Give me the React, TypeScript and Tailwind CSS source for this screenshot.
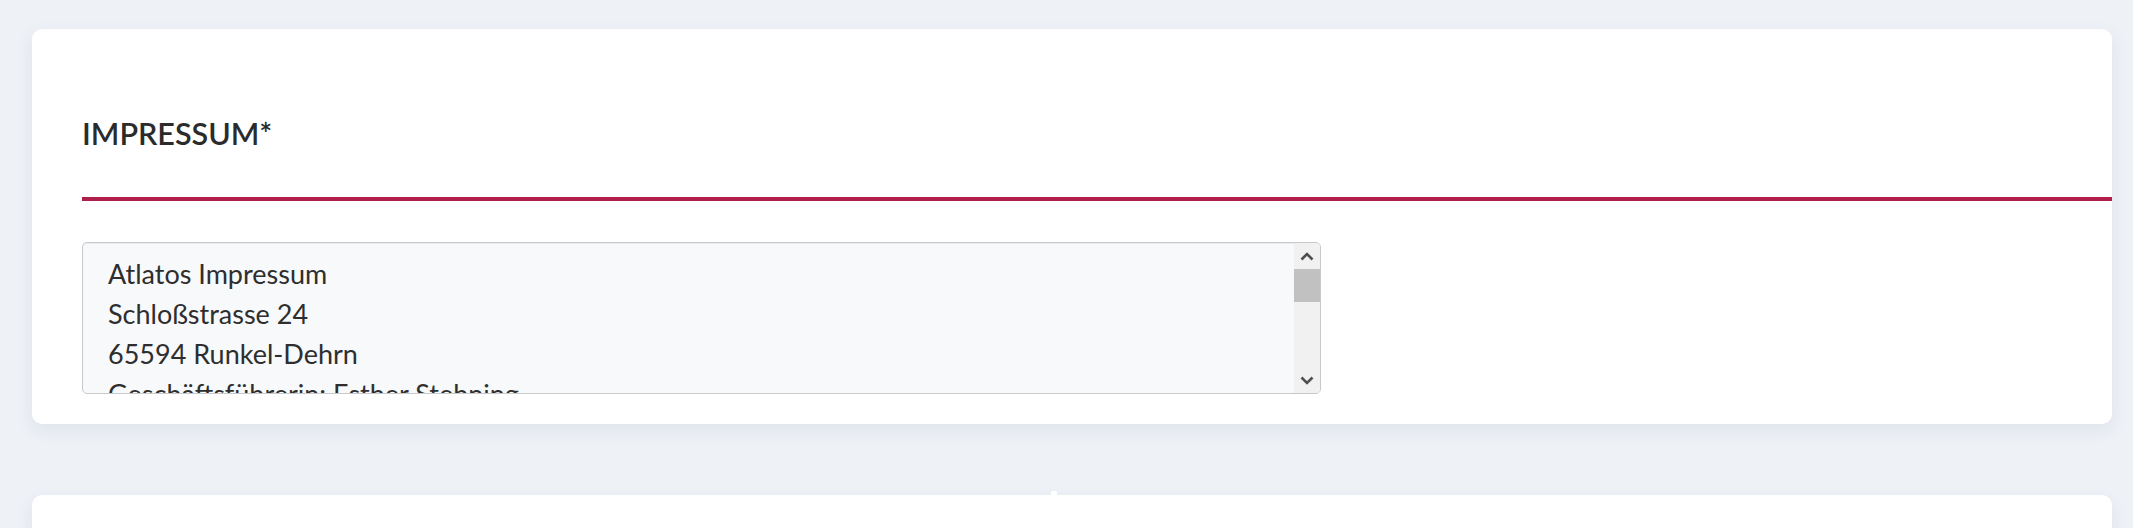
const lines = [
  "Atlatos Impressum",
  "Schloßstrasse 24",
  "65594 Runkel-Dehrn",
  "Geschäftsführerin: Esther Stehning",
  "Telefon: 06431 - 9 73 99 70",
];

function Chevron({ up }: { up?: boolean }) {
  return (
    <svg width="14" height="9" viewBox="0 0 14 9" className="block">
      <path
        d={up ? "M1.5 7.5 L7 2 L12.5 7.5" : "M1.5 1.5 L7 7 L12.5 1.5"}
        fill="none"
        stroke="#505050"
        strokeWidth="2.6"
      />
    </svg>
  );
}

function ScrollBox() {
  return (
    <div className="flex w-[1239px] h-[152px] rounded-[5px] border-[1.5px] border-[#c9c9c9] bg-[#f8f9fb] overflow-hidden shadow-[inset_0_1px_1px_rgba(0,0,0,0.06)]">
      <div className="flex-1 overflow-hidden pl-[25px] pt-[11px]">
        {lines.map((l) => (
          <p
            key={l}
            className="text-[27px] leading-[40px] text-[#2e2e2e] whitespace-nowrap"
          >
            {l}
          </p>
        ))}
      </div>
      <div className="flex flex-col w-[26px] bg-[#f1f1f1]">
        <div className="h-[26px] flex items-center justify-center">
          <Chevron up />
        </div>
        <div className="h-[33px] bg-[#c1c1c1]" />
        <div className="flex-1" />
        <div className="h-[26px] flex items-center justify-center">
          <Chevron />
        </div>
      </div>
    </div>
  );
}

export default function App() {
  return (
    <div
      className="min-h-screen bg-[#eef1f6] pt-[29px] pl-[32px] pr-[21px] overflow-hidden"
      style={{ fontFamily: "Lato, 'Open Sans', sans-serif" }}
    >
      <section className="bg-white rounded-[10px] shadow-[0_6px_18px_rgba(40,60,100,0.08)] pl-[50px] pt-[84px] pb-[30px]">
        <h2 className="text-[30.5px] leading-[40px] font-semibold text-[#2b2b2b]">
          IMPRESSUM*
        </h2>
        <div className="h-[4px] bg-[#b01e4a] mt-[44px]" />
        <div className="mt-[41px]">
          <ScrollBox />
        </div>
      </section>
      <div className="relative mt-[71px]">
        <div className="absolute left-[1019px] -top-[4px] w-[6px] h-[6px] rounded-t-[2px] bg-white" />
        <section className="bg-white rounded-[10px] h-[120px] shadow-[0_6px_18px_rgba(40,60,100,0.08)]" />
      </div>
    </div>
  );
}
